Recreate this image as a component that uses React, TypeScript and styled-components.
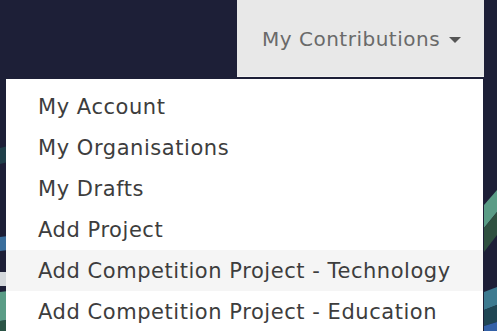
import React from "react";
import styled, { createGlobalStyle } from "styled-components";

const Global = createGlobalStyle`
  html, body { margin: 0; padding: 0; }
  body { background: #1d1f37; font-family: "DejaVu Sans", sans-serif; overflow: hidden; }
`;

const Page = styled.div`
  position: relative;
  width: 497px;
  height: 331px;
  overflow: hidden;
  background: #1d1f37;
`;

const Backdrop = styled.svg`
  position: absolute;
  inset: 0;
`;

const NavBar = styled.nav`
  position: relative;
  display: flex;
  justify-content: flex-end;
  padding-right: 13px;
`;

const NavItem = styled.div`
  position: relative;
  width: 247px;
  height: 77px;
  background: #e8e8e8;
  border-bottom: 1px solid #f2f2f2;
  display: flex;
  align-items: center;
  padding-left: 25px;
  padding-top: 2px;
  box-sizing: border-box;
  gap: 9px;
  color: #6a6a6a;
  font-size: 20px;
  letter-spacing: 0.5px;
`;

const Caret = styled.span`
  width: 0;
  height: 0;
  border-left: 6px solid transparent;
  border-right: 6px solid transparent;
  border-top: 6px solid #555;
  margin-top: 2px;
`;

const Menu = styled.ul`
  position: absolute;
  top: 79px;
  left: 6px;
  width: 477px;
  margin: 0;
  padding: 7px 0 0;
  list-style: none;
  background: #fff;
  height: 300px;
  box-sizing: border-box;
`;

const MenuItem = styled.li<{ $active?: boolean }>`
  height: 41px;
  display: flex;
  align-items: center;
  padding-left: 32px;
  color: #3d3d3d;
  font-size: 21px;
  letter-spacing: 0.55px;
  background: ${(p) => (p.$active ? "#f5f5f5" : "transparent")};
`;

const items = [
  "My Account",
  "My Organisations",
  "My Drafts",
  "Add Project",
  "Add Competition Project - Technology",
  "Add Competition Project - Education",
];

export default function App() {
  return (
    <Page>
      <Global />
      <Backdrop width="497" height="331" viewBox="0 0 497 331">
        <polygon points="0,148 8,146 8,162 0,164" fill="#1f3f4a" />
        <polygon points="0,237 8,236 8,250 0,251" fill="#3a6e9c" />
        <polygon points="0,272 8,272 8,286 0,286" fill="#d4d8dc" />
        <polygon points="0,292 8,291 8,320 0,321" fill="#5a9c86" />
        <polygon points="0,321 8,320 8,331 0,331" fill="#2b5446" />
        <polygon points="484,205 497,190 497,212 484,228" fill="#5a9c86" />
        <polygon points="484,228 497,212 497,235 484,252" fill="#2e5040" />
        <polygon points="484,292 497,287 497,305 484,310" fill="#3d7a90" />
        <polygon points="484,310 497,305 497,322 484,326" fill="#1f4654" />
        <polygon points="484,326 497,322 497,331 484,331" fill="#3462a8" />
      </Backdrop>
      <NavBar>
        <NavItem>
          My Contributions
          <Caret />
        </NavItem>
      </NavBar>
      <Menu>
        {items.map((t, i) => (
          <MenuItem key={t} $active={i === 4}>
            {t}
          </MenuItem>
        ))}
      </Menu>
    </Page>
  );
}
